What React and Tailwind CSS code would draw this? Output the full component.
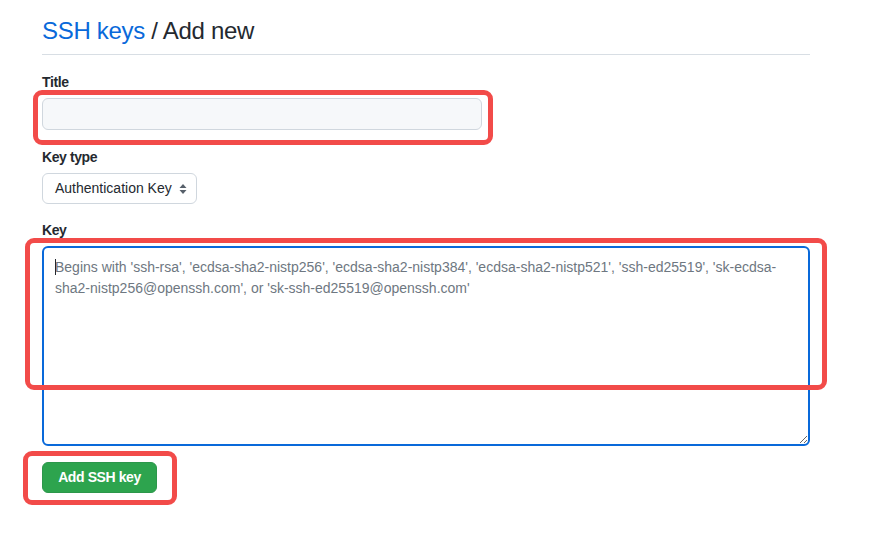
import React from 'react';

const font = { fontFamily: '"Liberation Sans", Arial, sans-serif' };

const SelectArrows = () => (
    <svg width="8" height="12" viewBox="0 0 8 12" className="shrink-0">
        <path d="M4 1 L7.5 5 L0.5 5 Z" fill="#57606a" />
        <path d="M4 11 L7.5 7 L0.5 7 Z" fill="#57606a" />
    </svg>
);

const PLACEHOLDER = "Begins with 'ssh-rsa', 'ecdsa-sha2-nistp256', 'ecdsa-sha2-nistp384', 'ecdsa-sha2-nistp521', 'ssh-ed25519', 'sk-ecdsa-sha2-nistp256@openssh.com', or 'sk-ssh-ed25519@openssh.com'";

const Field = ({ label, children, className = '' }) => (
    <div className={`flex flex-col gap-[5px] ${className}`}>
        <label className="font-bold leading-[21px] tracking-[-0.4px]">{label}</label>
        {children}
    </div>
);

export default function App() {
    return (
        <div style={font} className="relative w-[870px] h-[539px] bg-white text-[#24292f] text-[14px] overflow-hidden">
            <div className="w-[768px] ml-[42px] pt-[15px] flex flex-col">

                {/* Heading */}
                <div className="pb-[8px] border-b border-[#d8dee4]">
                    <h2 className="text-[24px] leading-[31px] font-normal tracking-[-0.3px]">
                        <a className="text-[#0969da]">SSH keys</a> / Add new
                    </h2>
                </div>

                <form className="flex flex-col gap-[16px] pt-[17px]">
                    <Field label="Title" className="mb-px">
                        <input
                            type="text"
                            className="w-[440px] h-[32px] bg-[#f6f8fa] border border-[#d0d7de] rounded-[6px] px-3 outline-none"
                        />
                    </Field>

                    <Field label="Key type">
                        <div className="w-[155px] h-[31px] border border-[#d0d7de] rounded-[6px] bg-white flex items-center justify-between pl-[12px] pr-[9px]">
                            <span>Authentication Key</span>
                            <SelectArrows />
                        </div>
                    </Field>

                    <Field label="Key">
                        <div className="relative">
                            <textarea
                                placeholder={PLACEHOLDER}
                                className="block w-[768px] h-[200px] border-2 border-[#0969da] rounded-[6px] pt-[9px] px-[11px] leading-[21px] placeholder:text-[#6e7781] outline-none resize"
                            />
                            {/* caret */}
                            <span className="absolute left-[13px] top-[13px] w-px h-[16px] bg-[#24292f]" />
                        </div>
                    </Field>

                    <div>
                        <button type="button" className="w-[115px] h-[31px] bg-[#2da44e] text-white font-bold tracking-[-0.4px] rounded-[6px] border border-[#2c974b]">
                            Add SSH key
                        </button>
                    </div>
                </form>
            </div>

            {/* Annotation boxes drawn over the page */}
            <div className="absolute left-[33px] top-[90px] w-[460px] h-[55px] border-[5px] border-[#f24b49] rounded-[9px]" />
            <div className="absolute left-[25px] top-[238px] w-[802px] h-[152px] border-[5px] border-[#f24b49] rounded-[9px]" />
            <div className="absolute left-[23px] top-[451px] w-[154px] h-[54px] border-[5px] border-[#f24b49] rounded-[9px]" />
        </div>
    );
}
